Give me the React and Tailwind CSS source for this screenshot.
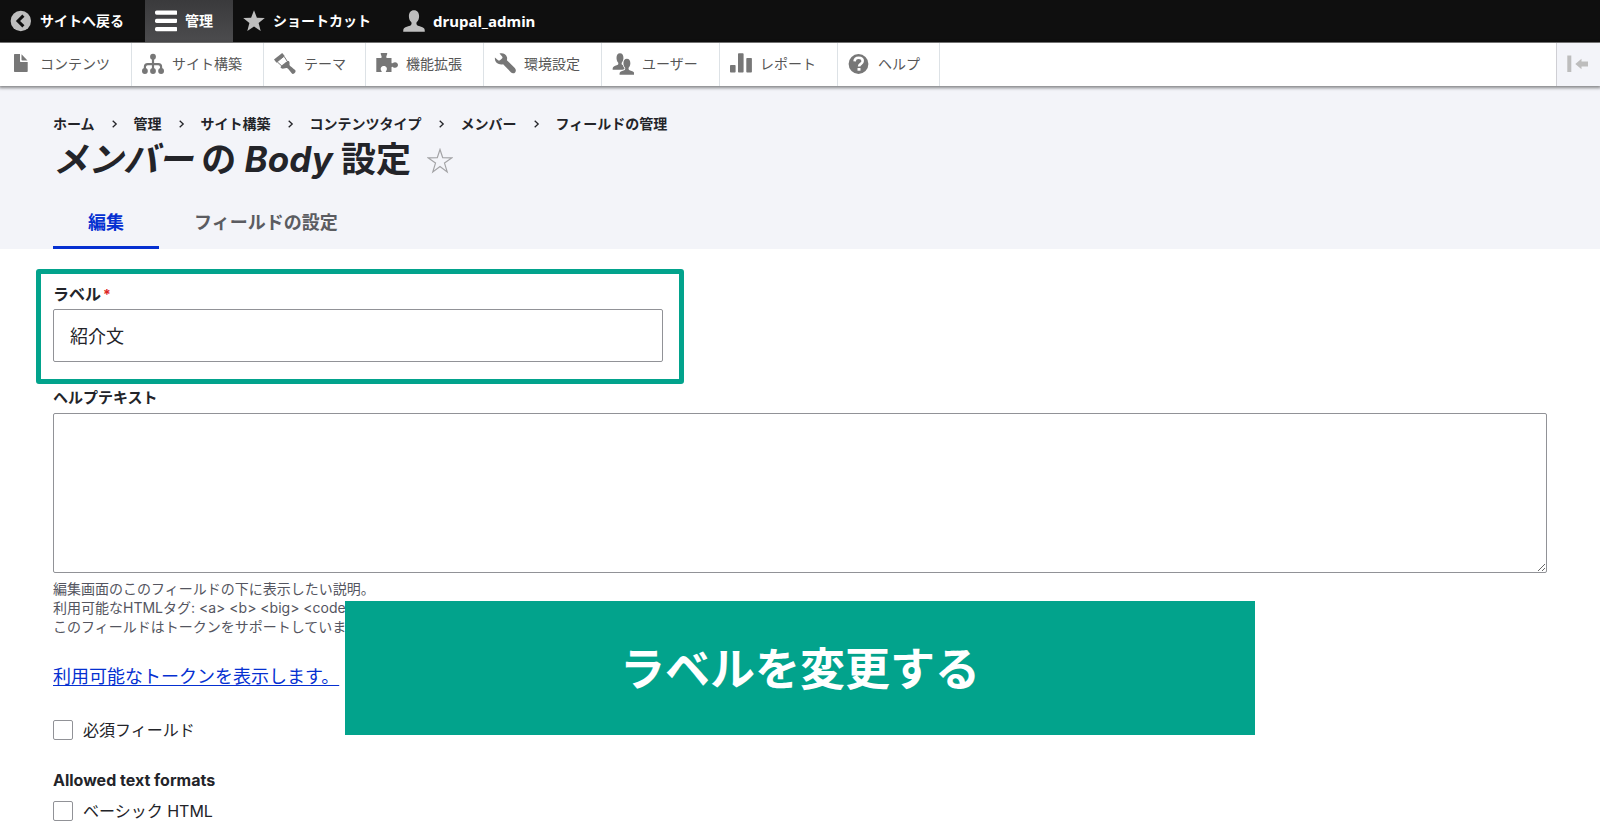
import React from "react";

function Icon({ children, className = "" }) {
  return (
    <svg
      viewBox="0 0 22 22"
      className={"h-[22px] w-[22px] shrink-0 " + className}
      fill="currentColor"
      aria-hidden="true"
    >
      {children}
    </svg>
  );
}

const BackIcon = () => (
  <Icon className="text-[#bebebe]">
    <circle cx="10.8" cy="11" r="10.2" />
    <path d="M13.4 5.6 8 11l5.4 5.4" fill="none" stroke="#0f0f0f" strokeWidth="3" />
  </Icon>
);

const MenuIcon = () => (
  <Icon className="text-white">
    <rect x="0" y="0.5" width="22.5" height="4.2" rx="1.6" />
    <rect x="0" y="8.7" width="22.5" height="4.2" rx="1.6" />
    <rect x="0" y="17" width="22.5" height="4.2" rx="1.6" />
  </Icon>
);

const StarIcon = () => (
  <Icon className="text-[#bebebe]">
    <path d="M11 .3l2.900 7.400 7.900.4-6.200 5 2.100 7.800-6.700-4.400-6.700 4.400 2.100-7.800-6.200-5 7.900-.4z" />
  </Icon>
);

const personPath =
  "M11 .2C7.600 .2 5.900 2.800 5.900 6.200c0 2.500.900 4.600 2.300 5.900.600.700.500 2.600-.4 3.200C6 16.500 1.800 16.800.8 18.500.3 19.300.2 20.300.2 21.700h21.600c0-1.400-.1-2.400-.6-3.200-1-1.700-5.200-2-7-3.200-.9-.6-1-2.500-.4-3.200 1.400-1.300 2.300-3.400 2.300-5.900C16.100 2.800 14.400.2 11 .2z";

const PersonIcon = () => (
  <Icon className="text-[#bebebe]">
    <path d={personPath} />
  </Icon>
);

const FileIcon = () => (
  <Icon className="text-[#777]">
    <path d="M4.700 1H10v7.300c0 .4.300.7.700.7h7v9.300c0 .4-.3.7-.7.7H4.700c-.4 0-.7-.3-.7-.7V1.700C4 1.300 4.300 1 4.700 1z" />
    <path d="M11.500 1.200l6 6.200h-5.300c-.4 0-.7-.3-.7-.7z" />
  </Icon>
);

const StructureIcon = () => (
  <Icon className="text-[#777]">
    <circle cx="11" cy="3.700" r="2.900" />
    <path d="M11 5v13M2.900 17.500V14c0-1.600 1.200-2.800 2.800-2.800h10.600c1.600 0 2.800 1.200 2.800 2.800v3.500" fill="none" stroke="currentColor" strokeWidth="2.200" />
    <circle cx="2.900" cy="18" r="2.900" />
    <circle cx="11" cy="18" r="2.900" />
    <circle cx="19.100" cy="18" r="2.900" />
  </Icon>
);

const ThemeIcon = () => (
  <Icon className="text-[#777]">
    <path d="M0 6.500L8.200 0l2.500 3-8.200 6.700z" />
    <path d="M3.200 8.800L10 3.300l3.700 5.700-5.500 4.400z" fill="white" stroke="currentColor" strokeWidth="1" />
    <path d="M6.600 14.600c-.3-.9 1.500-2.500 3.900-4.400 2-1.600 3.900-2.700 4.500-2 1 1.200.4 3.100.5 3.700.1.600 1.600 1.700 5.300 4.900.9.800 1.100 1.700.3 2.600l-1 1c-.9.800-1.800.6-2.600-.4-2.700-3.500-3.700-4.700-4.500-5-.9-.2-5.400 1.800-6.400-.4z" />
  </Icon>
);

const ExtendIcon = () => (
  <Icon className="text-[#777]">
    <path d="M5.400 0h5.200c.5 0 .8.400.6.900l-.8 2.300c-.3.900 0 1.800.9 1.800h4.200v4.500c0 .9.700 1.100 1.300.6C19 8.300 22 9.600 22 12s-3 3.700-5.200 1.900c-.6-.5-1.300-.3-1.300.6V19h-5.200c-.5 0-.6-.4-.3-.8 2-2.400.5-5.200-2.200-5.200s-4.200 2.800-2.200 5.200c.3.400.2.800-.3.800H.3V5h4.300c.9 0 1.300-.9.9-1.800L4.700.9C4.500.4 4.900 0 5.400 0z" />
  </Icon>
);

const ConfigIcon = () => (
  <Icon className="text-[#777]">
    <path d="M5.500.6C8.300-.6 12 .7 13 4.300c.2.900.2 1.900-.1 2.900l7.900 7.900c1.300 1.300 1.400 3.200.3 4.300-1.200 1.200-3 1.100-4.300-.2l-7.700-8c-3.900 1-7.900-1.200-8.200-5.200L.9 4.400l2.900 2.700c.7.600 1.500.7 2.200.2L8 5.600c.6-.6.7-1.500.1-2.200z" />
  </Icon>
);

const UsersIcon = () => (
  <Icon className="text-[#777]">
    <g transform="translate(0.500,0.200) scale(0.680,0.760)">
      <path d={personPath} />
    </g>
    <g transform="translate(7.400,5.600) scale(0.680,0.740)">
      <path d={personPath} fill="white" stroke="white" strokeWidth="2.400" />
      <path d={personPath} />
    </g>
  </Icon>
);

const ReportsIcon = () => (
  <Icon className="text-[#777]">
    <rect x="0" y="12" width="5.600" height="7.500" rx="0.800" />
    <rect x="8" y="0.200" width="5.600" height="19.300" rx="0.800" />
    <rect x="16.300" y="5" width="5.600" height="14.500" rx="0.800" />
  </Icon>
);

const HelpIcon = () => (
  <Icon className="text-[#777]">
    <circle cx="10.500" cy="11" r="9.900" />
    <path d="M6.600 8.400C6.700 5.900 8.500 4.700 10.700 4.700c2.300 0 4 1.300 4 3.300 0 3-3.600 2.700-3.600 5.500" fill="none" stroke="white" strokeWidth="2.600" />
    <rect x="9.500" y="15" width="3" height="2.700" fill="white" />
  </Icon>
);

const CollapseIcon = () => (
  <Icon className="text-[#bdbdbd]">
    <rect x="0.300" y="2.500" width="4" height="16.500" />
    <path d="M8.300 11l6.200-5.300v2.900h6.500v4.800h-6.500v2.900z" />
  </Icon>
);

const barItems = [
  { label: "サイトへ戻る", icon: BackIcon, width: "w-[145px] text-sm" },
  { label: "管理", icon: MenuIcon, width: "w-[88px] text-sm", active: true },
  { label: "ショートカット", icon: StarIcon, width: "w-[160px] text-sm" },
  { label: "drupal_admin", icon: PersonIcon, width: "text-[15px]" },
];

const trayItems = [
  { label: "コンテンツ", icon: FileIcon, width: "w-[132px]" },
  { label: "サイト構築", icon: StructureIcon, width: "w-[132px]" },
  { label: "テーマ", icon: ThemeIcon, width: "w-[102px]" },
  { label: "機能拡張", icon: ExtendIcon, width: "w-[118px]" },
  { label: "環境設定", icon: ConfigIcon, width: "w-[118px]" },
  { label: "ユーザー", icon: UsersIcon, width: "w-[118px]" },
  { label: "レポート", icon: ReportsIcon, width: "w-[118px]" },
  { label: "ヘルプ", icon: HelpIcon, width: "w-[102px]" },
];

const crumbs = ["ホーム", "管理", "サイト構築", "コンテンツタイプ", "メンバー", "フィールドの管理"];

function AdminBar() {
  return (
    <nav
      aria-label="ツールバー"
      className="flex h-[43px] border-b border-[#8a8a8a] bg-[#0f0f0f] font-['Noto_Sans','Noto_Sans_CJK_JP',sans-serif] font-bold text-white"
    >
      {barItems.map(({ label, icon: Glyph, width, active }) => (
        <a
          key={label}
          href="#"
          className={
            "flex items-center gap-2 pl-[10px] whitespace-nowrap " +
            width +
            (active ? " bg-linear-to-b from-[#3a3a3c] to-[#4c4c4e]" : "")
          }
        >
          <Glyph />
          {label}
        </a>
      ))}
    </nav>
  );
}

function AdminTray() {
  return (
    <nav
      aria-label="管理メニュー"
      className="relative flex h-[43px] bg-white font-['Noto_Sans','Noto_Sans_CJK_JP',sans-serif] text-sm text-[#565656] shadow-[0_1px_3px_1px_rgba(0,0,0,0.45)]"
    >
      {trayItems.map(({ label, icon: Glyph, width }) => (
        <a
          key={label}
          href="#"
          className={"flex items-center gap-2 border-r border-[#dde2e6] pb-[2px] pl-[10px] whitespace-nowrap " + width}
        >
          <Glyph />
          {label}
        </a>
      ))}
      <button
        type="button"
        aria-label="縦方向に切り替え"
        className="ml-auto flex w-11 items-center border-l border-[#cfcfd4] bg-[#f3f4f9] pb-[2px] pl-[10px]"
      >
        <CollapseIcon />
      </button>
    </nav>
  );
}

function PageHeader() {
  return (
    <header className="bg-[#f3f4f9] px-[53px] pt-7">
      <nav aria-label="パンくず">
        <ol className="flex text-sm leading-5 font-bold">
          {crumbs.map((crumb, i) => (
            <li key={crumb} className="flex items-center">
              {i > 0 && (
                <svg viewBox="0 0 7 8" className="mx-4 h-2 w-[7px]" fill="none" stroke="currentColor" strokeWidth="1.300" aria-hidden="true">
                  <path d="M1.700 .7L5.200 4 1.700 7.300" />
                </svg>
              )}
              <a href="#">{crumb}</a>
            </li>
          ))}
        </ol>
      </nav>
      <div className="flex items-center gap-4 pt-[2px]">
        <h1 className="pb-1 text-[35px] leading-[46px] font-bold">
          <em>メンバー</em> の <em>Body</em> 設定
        </h1>
        <button type="button" aria-label="ショートカットに追加">
          <svg viewBox="0 0 26 26" className="h-[26px] w-[26px]" fill="none" stroke="#a3a3a6" strokeWidth="1.200" aria-hidden="true">
            <path d="M13 1.500l2.700 8.200 9 .2-7.200 5.200 2.700 8.800-7.200-5.300-7.200 5.300 2.700-8.800L1.300 9.900l9-.2z" />
          </svg>
        </button>
      </div>
      <div className="mt-[13px] flex text-lg font-bold">
        <a href="#" aria-current="page" className="flex h-[50px] items-center border-b-[3px] border-[#0530d1] px-[35px] text-[#0530d1]">
          編集
        </a>
        <a href="#" className="flex h-[50px] items-center border-b-[3px] border-transparent px-[35px] text-[#5b5c61]">
          フィールドの設定
        </a>
      </div>
    </header>
  );
}

function Checkbox({ id, label }) {
  return (
    <div className="flex items-center gap-[10px]">
      <input
        id={id}
        type="checkbox"
        className="h-5 w-5 appearance-none rounded-[2px] border border-[#919297] bg-white"
      />
      <label htmlFor={id} className="text-base leading-6">
        {label}
      </label>
    </div>
  );
}

function SettingsForm() {
  return (
    <form className="px-[53px] pt-[35px]" onSubmit={(e) => e.preventDefault()}>
      <div className="relative w-[610px]">
        <label htmlFor="label" className="block pb-[5px] text-base leading-5 font-bold">
          ラベル<span className="ml-[2px] text-sm leading-none text-[#dc2323]">*</span>
        </label>
        <input
          id="label"
          type="text"
          defaultValue="紹介文"
          className="block h-[53px] w-full rounded-[2px] border border-[#919297] bg-white px-4 pb-[2px] text-lg"
        />
        <div className="pointer-events-none absolute -top-[15px] -right-[21px] -bottom-[22px] -left-[17px] rounded-[3px] border-[5px] border-[#02a38c]" />
      </div>

      <div className="mt-[26px]">
        <label htmlFor="help" className="block pb-[5px] text-[15px] leading-5 font-bold">
          ヘルプテキスト
        </label>
        <textarea
          id="help"
          className="block h-[160px] w-full rounded-[2px] border border-[#919297] bg-white p-4 text-lg"
        />
        <p className="mt-[6px] text-sm leading-[19px] text-[#545560]">
          編集画面のこのフィールドの下に表示したい説明。
          <br />
          {"利用可能なHTMLタグ: <a> <b> <big> <code> <del> <em> <i> <ins> <pre> <q> <small> <span> <strong> <sub> <sup>"}
          <br />
          このフィールドはトークンをサポートしています。
        </p>
      </div>

      <p className="mt-[26px] text-lg leading-[30px]">
        <a href="#" className="text-[#0530d1] underline decoration-[#0530d1] underline-offset-2">
          利用可能なトークンを表示します。
        </a>
      </p>

      <div className="mt-[26px]">
        <Checkbox id="required" label="必須フィールド" />
      </div>

      <fieldset className="mt-[26px] pb-3">
        <legend className="pb-[7px] text-base leading-6 font-bold">Allowed text formats</legend>
        <Checkbox id="basic-html" label="ベーシック HTML" />
      </fieldset>
    </form>
  );
}

export default function App() {
  return (
    <div className="relative min-h-screen bg-white font-['Inter','Noto_Sans_CJK_JP',sans-serif] text-[#232429]">
      <AdminBar />
      <AdminTray />
      <PageHeader />
      <main>
        <SettingsForm />
      </main>
      <div className="absolute top-[601px] left-1/2 flex h-[134px] w-[910px] -translate-x-1/2 items-center justify-center bg-[#02a38c] pt-1 text-[45px] font-bold text-white">
        ラベルを変更する
      </div>
    </div>
  );
}
